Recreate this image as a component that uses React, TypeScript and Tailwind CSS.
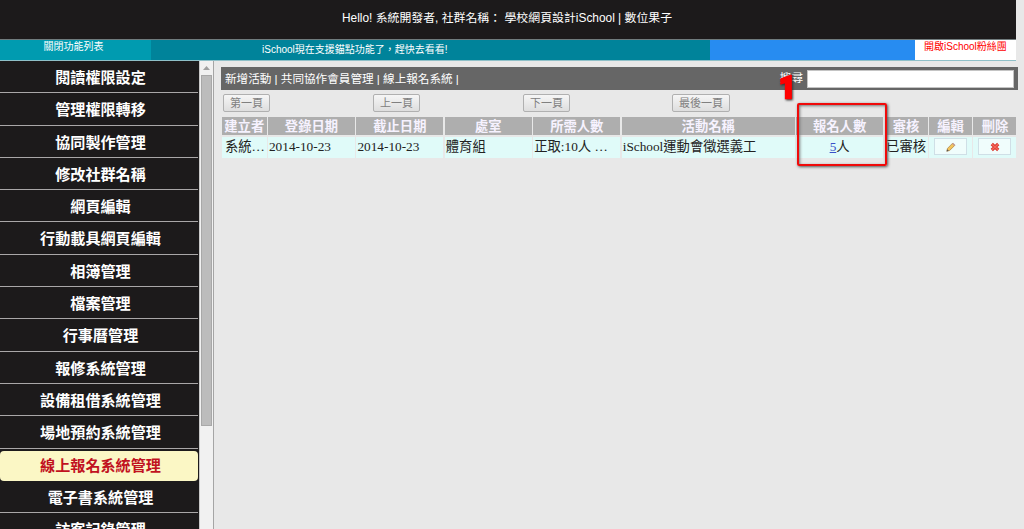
import type { ReactNode } from "react";
import { clsx } from "clsx";

const MENU_ITEMS = [
  "閱讀權限設定",
  "管理權限轉移",
  "協同製作管理",
  "修改社群名稱",
  "網頁編輯",
  "行動載具網頁編輯",
  "相簿管理",
  "檔案管理",
  "行事曆管理",
  "報修系統管理",
  "設備租借系統管理",
  "場地預約系統管理",
  "線上報名系統管理",
  "電子書系統管理",
  "訪客記錄管理",
];

const ACTIVE_ITEM = "線上報名系統管理";

const COLUMNS = [
  "建立者",
  "登錄日期",
  "截止日期",
  "處室",
  "所需人數",
  "活動名稱",
  "報名人數",
  "審核",
  "編輯",
  "刪除",
];

const GRID =
  "grid grid-cols-[44.5px_87px_87px_87px_87px_173px_87px_43px_43px_43px] gap-x-[1.45px]";

export default function App() {
  return (
    <div className="flex h-[529px] w-[1024px] flex-col overflow-hidden bg-[#e8e8e8] font-['Liberation_Sans','Noto_Sans_CJK_TC',sans-serif] whitespace-nowrap">
      <TopBar />
      <div className="flex min-h-0 flex-1">
        <Sidebar />
        <Scrollbar />
        <main className="flex-1 pt-1.5 pl-[7px]">
          <Toolbar />
          <Pager />
          <ActivityTable />
        </main>
      </div>
    </div>
  );
}

function TopBar() {
  return (
    <header className="w-[1016px] shrink-0">
      <div className="h-[39px] bg-[#1c1a1b] pt-[9px] pr-0.5 text-center text-[11.9px] leading-[18px] text-white">
        Hello! 系統開發者, 社群名稱： 學校網頁設計iSchool | 數位果子
      </div>
      <div className="flex h-[22px] border-t border-b border-t-[#707b7d] border-b-[#8fc0c8] text-[10px]">
        <div className="w-[151px] bg-[#009bb0] pr-1 text-center leading-[14px] text-white">
          關閉功能列表
        </div>
        <div className="w-[559px] bg-[#00839a] pl-[111px] leading-[19px] text-white">
          iSchool現在支援錨點功能了，趕快去看看!
        </div>
        <div className="w-[205px] bg-[#278cf1]" />
        <div className="flex-1 bg-white pl-[9px] leading-[14px] text-[#ff0000]">
          開啟iSchool粉絲團
        </div>
      </div>
    </header>
  );
}

function Sidebar() {
  return (
    <nav className="w-[199px] shrink-0 overflow-hidden bg-[#1c1a1b] pr-px">
      {MENU_ITEMS.map((item) => {
        const active = item === ACTIVE_ITEM;
        return (
          <div
            key={item}
            className={clsx(
              "h-[32.3px] text-center font-['Noto_Sans_CJK_TC',sans-serif] text-[15.1px] font-bold",
              active
                ? "pt-[2px] text-[#c1121f]"
                : "border-b border-[#a9a7a8] pl-[3px] leading-[31px] text-white",
            )}
          >
            {active ? (
              <div className="h-[30px] rounded-[4px] bg-[#fbf7c5] pl-[3px] leading-[27px]">
                {item}
              </div>
            ) : (
              item
            )}
          </div>
        );
      })}
    </nav>
  );
}

function Scrollbar() {
  return (
    <div className="flex w-[15px] shrink-0 flex-col items-center border-r border-l border-r-[#a5a5a5] border-l-[#c8c8c8] bg-[#f1f1f1]">
      <div className="flex h-[14px] items-center">
        <svg width="7" height="4" viewBox="0 0 7 4" fill="#a0a0a0">
          <path d="M3.5 0 7 4H0z" />
        </svg>
      </div>
      <div className="h-[351px] w-[11px] border border-[#a8a8a8] bg-[#bcbcbc]" />
    </div>
  );
}

function Toolbar() {
  return (
    <div className="flex h-[23px] w-[797px] items-center bg-[#666] pr-1 pl-1 text-[11.6px] leading-[22px] text-white">
      <span>新增活動 | 共同協作會員管理 | 線上報名系統 |</span>
      <label className="relative ml-auto flex items-center gap-1">
        <span className="pb-px">搜尋</span>
        <input className="h-[18px] w-[207px] border border-[#c4c4c4] bg-white" />
        <StepMarker />
      </label>
    </div>
  );
}

/** Numbered callout pin, sits over the search label. */
function StepMarker() {
  return (
    <span className="absolute top-[2px] left-[-1px] z-10 origin-left scale-x-[0.9] font-[Roboto,sans-serif] text-[32px] leading-[36px] font-black text-[#ff0000] [-webkit-text-stroke:2.5px_#ff0000] [filter:drop-shadow(1px_1px_1px_#333)]">
      1
    </span>
  );
}

function PageButton({ label }: { label: string }) {
  return (
    <button
      type="button"
      className="h-[18px] rounded-[2px] border border-[#b0b0b0] bg-linear-to-b from-[#f6f6f6] to-[#dedede] px-[6px] text-[11px] leading-[16px] text-[#808080]"
    >
      {label}
    </button>
  );
}

function Pager() {
  return (
    <div className="grid grid-cols-[150px_150px_149px_150px] justify-items-start pt-1 pl-0.5">
      <PageButton label="第一頁" />
      <PageButton label="上一頁" />
      <PageButton label="下一頁" />
      <PageButton label="最後一頁" />
    </div>
  );
}

function ActivityTable() {
  return (
    <div className="relative mt-[5px] ml-px w-[795px] font-['Liberation_Serif','Noto_Sans_CJK_TC',serif] text-[13.3px]">
      <div className={clsx(GRID, "text-center font-bold text-[#f6f2ff]")}>
        {COLUMNS.map((name) => (
          <div key={name} className="h-[18px] bg-[#aeaeae] leading-[19px]">
            {name}
          </div>
        ))}
      </div>
      <div
        className={clsx(
          GRID,
          "mt-[2px] leading-[20px] text-[#222] *:h-[21px] *:overflow-hidden *:bg-[#e0fbf9] *:px-px",
        )}
      >
        <div className="pl-[3px]!">系統…</div>
        <div>2014-10-23</div>
        <div>2014-10-23</div>
        <div>體育組</div>
        <div>正取:10人 …</div>
        <div>iSchool運動會徵選義工</div>
        <div className="text-center">
          <a href="#signups" className="text-[#3a50c8] underline">
            5
          </a>
          人
        </div>
        <div className="text-center">已審核</div>
        <div className="flex items-center justify-center">
          <IconButton label="編輯">
            <PencilIcon />
          </IconButton>
        </div>
        <div className="flex items-center justify-center">
          <IconButton label="刪除">
            <CrossIcon />
          </IconButton>
        </div>
      </div>
      <div className="absolute top-[-14px] left-[575px] h-[63px] w-[90px] rounded-[2px] border-2 border-[#f00a0a] shadow-[1px_1px_3px_#555,inset_1px_1px_3px_#777]" />
    </div>
  );
}

function IconButton({
  label,
  children,
}: {
  label: string;
  children: ReactNode;
}) {
  return (
    <button
      type="button"
      aria-label={label}
      className="mb-0.5 flex h-[17px] w-[33px] items-center justify-center border border-[#cfdfe6] bg-[#f0fdfc]"
    >
      {children}
    </button>
  );
}

function PencilIcon() {
  return (
    <svg width="10" height="10" viewBox="0 0 10 10">
      <path d="M.8 9.2 1.5 6.4 6.6 1.2 8.8 3.4 3.6 8.5z" fill="#f3c45c" stroke="#a9803c" strokeWidth="0.7" />
      <path d="M7.1.7 9.3 2.9 8.2 4 6 1.8z" fill="#c39a94" />
      <path d="M.6 9.4 1.2 7.2 2.8 8.8z" fill="#555" />
    </svg>
  );
}

function CrossIcon() {
  return (
    <svg width="10" height="10" viewBox="0 0 10 10">
      <path d="M1.8 2 8.2 8M8.2 2 1.8 8" stroke="#d9362b" strokeWidth="3.2" />
      <path d="M2 2.2 8 7.8M8 2.2 2 7.8" stroke="#f4695c" strokeWidth="1.4" />
    </svg>
  );
}
